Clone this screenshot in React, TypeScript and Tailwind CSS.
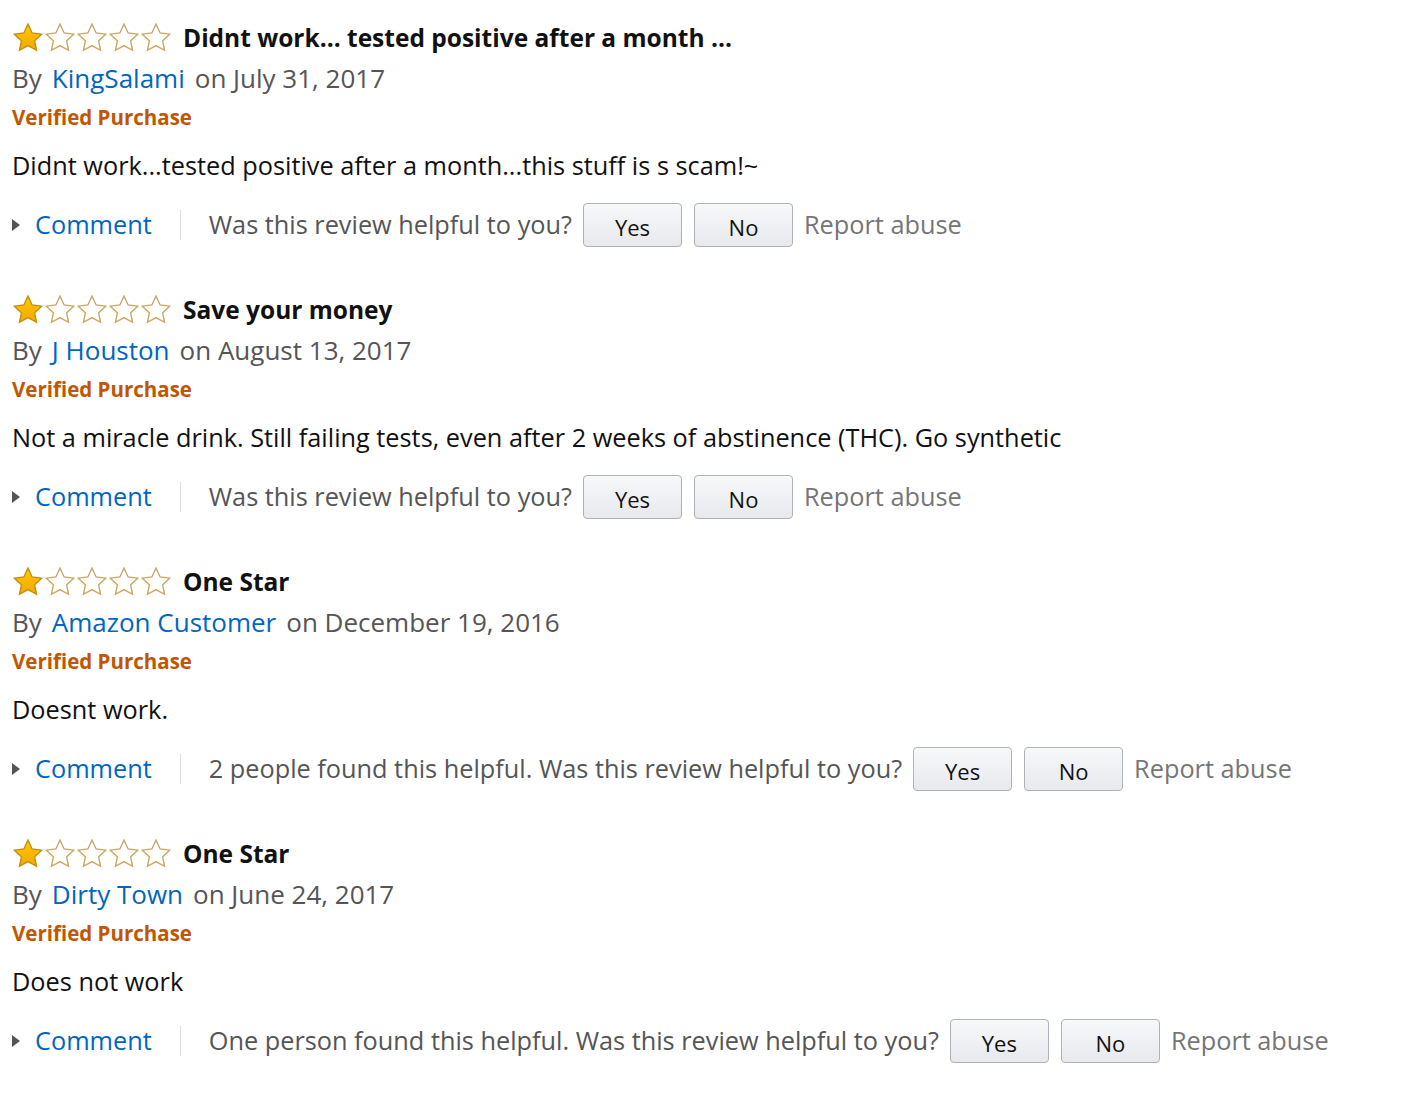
import React from "react";

type Review = {
  title: string;
  author: string;
  date: string;
  body: string;
  helpful?: string;
};

const reviews: Review[] = [
  {
    title: "Didnt work... tested positive after a month ...",
    author: "KingSalami",
    date: "July 31, 2017",
    body: "Didnt work...tested positive after a month...this stuff is s scam!~",
  },
  {
    title: "Save your money",
    author: "J Houston",
    date: "August 13, 2017",
    body: "Not a miracle drink. Still failing tests, even after 2 weeks of abstinence (THC). Go synthetic",
  },
  {
    title: "One Star",
    author: "Amazon Customer",
    date: "December 19, 2016",
    body: "Doesnt work.",
    helpful: "2 people found this helpful. ",
  },
  {
    title: "One Star",
    author: "Dirty Town",
    date: "June 24, 2017",
    body: "Does not work",
    helpful: "One person found this helpful. ",
  },
];

const StarPath =
  "M12 1.6l3.1 6.6 7.2.9-5.3 5 1.4 7.1L12 17.7l-6.4 3.5 1.4-7.1-5.3-5 7.2-.9z";

const Stars = () => (
  <div className="flex items-center">
    {[0, 1, 2, 3, 4].map((i) => (
      <svg key={i} width="32" height="32" viewBox="0 0 24 24" className="shrink-0">
        <defs>
          <linearGradient id={`g${i}`} x1="0" y1="0" x2="0" y2="1">
            <stop offset="0" stopColor="#ffce00" />
            <stop offset="1" stopColor="#f0a500" />
          </linearGradient>
        </defs>
        <path
          d={StarPath}
          fill={i === 0 ? `url(#g${i})` : "none"}
          stroke={i === 0 ? "#c98a0a" : "#c9a45c"}
          strokeWidth="1"
          strokeLinejoin="miter"
        />
      </svg>
    ))}
  </div>
);

const VoteButton = ({ label }: { label: string }) => (
  <button className="w-[99px] h-[44px] rounded-[4px] border border-[#adb1b8] bg-gradient-to-b from-[#f7f8fa] to-[#e7e9ec] text-[22px] text-[#111] shadow-[0_1px_0_rgba(255,255,255,0.6)_inset] flex items-center justify-center pt-[3px]">
    {label}
  </button>
);

const ReviewItem = ({ r }: { r: Review }) => (
  <div className="flex flex-col">
    <div className="flex items-center h-[40px]">
      <Stars />
      <h3 className="ml-[11px] text-[24.5px] font-bold text-[#111] leading-none">{r.title}</h3>
    </div>
    <div className="flex items-center h-[40px] text-[26px] text-[#555] leading-none">
      <span>By</span>
      <a className="ml-[10px] text-[#0066c0]">{r.author}</a>
      <span className="ml-[10px]">on {r.date}</span>
    </div>
    <div className="flex items-center h-[38px] text-[20.5px] font-bold text-[#c45500] leading-none">
      Verified Purchase
    </div>
    <p className="mt-[10px] h-[40px] flex items-center text-[25.3px] text-[#111] leading-none">{r.body}</p>
    <div className="mt-[17px] flex items-center h-[44px] text-[25.3px] leading-none">
      <span className="w-0 h-0 border-y-[6px] border-y-transparent border-l-[8px] border-l-[#555] mr-[15px]" />
      <a className="text-[#0066c0]">Comment</a>
      <span className="mx-[28px] w-px h-[30px] bg-[#ddd]" />
      <span className="text-[#555]">
        {r.helpful ?? ""}Was this review helpful to you?
      </span>
      <div className="ml-[11px] flex gap-[12px]">
        <VoteButton label="Yes" />
        <VoteButton label="No" />
      </div>
      <span className="ml-[11px] text-[#767676]">Report abuse</span>
    </div>
  </div>
);

export default function App() {
  return (
    <div className="min-h-screen bg-white pl-[12px] pt-[18px] font-['Open_Sans',sans-serif] flex flex-col gap-[43px]">
      {reviews.map((r, i) => (
        <ReviewItem key={i} r={r} />
      ))}
    </div>
  );
}
